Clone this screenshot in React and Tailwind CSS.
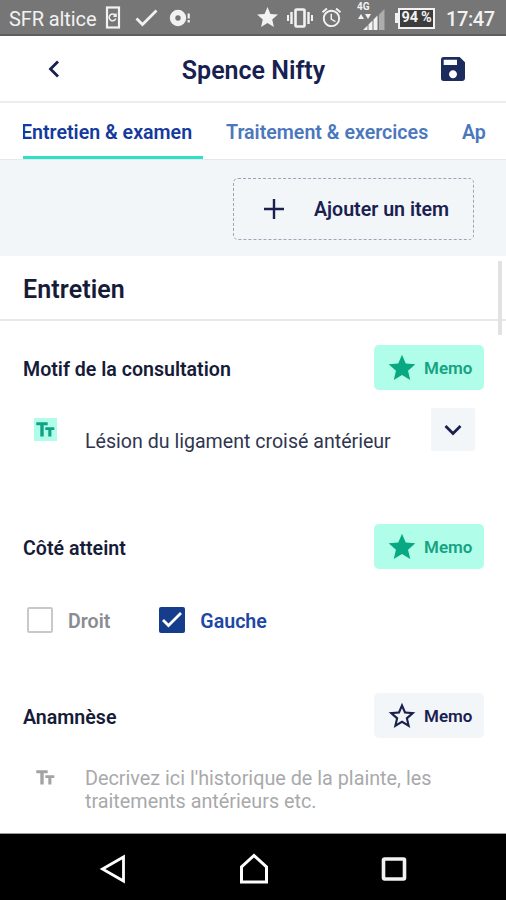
import clsx from 'clsx';
import { MdStar, MdStarBorder, MdAlarm, MdSave } from 'react-icons/md';

const StatusBar = () => {
    return (
        <div className="flex h-9 shrink-0 items-center border-b-2 border-[#5f5f5f] bg-[#767676] pl-[9px] pr-[11px] text-[#f2f2f2]">
            <span className="w-[96px] whitespace-nowrap pt-[3px] text-[20px] leading-9 tracking-[-0.1px]">SFR altice</span>
            <svg className="mt-px h-[23px] w-[16px]" viewBox="0 0 16 23" fill="none" stroke="currentColor">
                <rect x="2" y="1.5" width="12" height="20" strokeWidth="2.2" />
                <path d="M10.2 9.2A3.4 3.4 0 1 0 10.8 12.5M11 7.5v2.8H8.4" strokeWidth="1.5" />
            </svg>
            <svg className="ml-[14px] mt-[2px] h-[18px] w-[23px]" viewBox="0 0 23 18" fill="none" stroke="currentColor">
                <path d="M1.5 9.5l6 6L21.5 1.5" strokeWidth="2.8" />
            </svg>
            <svg className="ml-[11px] mt-[2px] h-[18px] w-[22px]" viewBox="0 0 22 18" fill="currentColor">
                <path fillRule="evenodd" d="M9 .8a8.2 8.2 0 1 0 0 16.4A8.2 8.2 0 0 0 9 .8zM9 6.3a2.7 2.7 0 1 1 0 5.4 2.7 2.7 0 0 1 0-5.4z" />
                <path d="M18.6 4.5h2.2v5h-2.2zM18.6 11h2.2v2.4h-2.2z" />
            </svg>
            <div className="ml-auto flex items-center">
                <MdStar className="mt-px size-[25px]" />
                <svg className="ml-[6px] mt-px h-[22px] w-[28px]" viewBox="0 0 28 22" fill="none" stroke="currentColor">
                    <rect x="9.5" y="2.5" width="9" height="17" rx="1" strokeWidth="2.6" />
                    <path d="M5.500 5v12M22.500 5v12" strokeWidth="2.4" />
                    <path d="M2 8v6M26 8v6" strokeWidth="2" />
                </svg>
                <MdAlarm className="ml-[6px] mt-px size-[23px]" />
                <svg className="ml-[14px] h-[32px] w-[30px]" viewBox="0 0 30 32" fill="currentColor">
                    <text x="0" y="9" fontSize="10" fontWeight="700" fontFamily="Roboto, sans-serif">4G</text>
                    <path d="M1 18l3-5 3 5zM8 13h6l-3 5z" />
                    <path d="M6 29l4.5-4.5V29zM11.5 23.5l4-4V29h-4zM16.5 18.5l4-4V29h-4z" />
                    <path d="M22 13.5L27.5 8V29H22z" opacity=".45" />
                </svg>
                <div className="ml-[8px] mt-px h-[10px] w-[3px] bg-[#f2f2f2]" />
                <div className="mt-[2px] flex h-[21px] w-[37px] items-center justify-center border-2 border-[#f2f2f2] bg-[#3c3c3c] pt-px text-[14.5px] font-bold leading-none tracking-[-0.3px]">
                    94 %
                </div>
                <span className="ml-[11px] w-[49px] whitespace-nowrap pt-[3px] text-[20px] font-medium leading-9 tracking-[-0.4px]">17:47</span>
            </div>
        </div>
    );
};

const Header = () => {
    return (
        <div className="flex h-[67px] shrink-0 items-center border-b-2 border-[#ebedf0] pl-[47px] pr-[37px]">
            <svg className="h-[18px] w-[12px]" viewBox="0 0 12 18" fill="none" stroke="#1a1f4d" strokeWidth="2.8">
                <path d="M11 1.5L3.5 9l7.5 7.5" />
            </svg>
            <h1 className="flex-1 pl-[11px] pt-[4px] text-center text-[25px] font-semibold leading-8 text-[#172150]">Spence Nifty</h1>
            <MdSave className="size-[32px] text-[#1c2c5c]" />
        </div>
    );
};

const Tabs = () => {
    return (
        <div className="flex h-[57px] shrink-0 overflow-hidden border-b border-[#e3e8ea] pl-[23px] text-[19.6px] font-semibold leading-[60px] text-[#4b78bd]">
            <div className="w-[180px] shrink-0 overflow-hidden whitespace-nowrap border-b-[3px] border-[#2fe0c6] text-[#143a9c]">
                <span className="-ml-[2px]">Entretien & examen</span>
            </div>
            <div className="ml-[23px] w-[236px] shrink-0 whitespace-nowrap">Traitement & exercices</div>
            <div className="whitespace-nowrap">Ap</div>
        </div>
    );
};

const MemoButton = ({ active }) => {
    const Icon = active ? MdStar : MdStarBorder;
    return (
        <button
            className={clsx(
                'flex h-[45px] w-[110px] items-center rounded-[5px] pl-[12px] text-[17px] font-semibold',
                active ? 'bg-[#b0fee9] text-[#16a283]' : 'bg-[#f3f6f8] text-[#1a2150]'
            )}
        >
            <Icon className={clsx('size-8 shrink-0', active && 'text-[#08a982]')} />
            <span className="ml-[6px] pt-[3px]">Memo</span>
        </button>
    );
};

const FieldTitle = ({ title, memo }) => {
    return (
        <div className="flex h-[45px] items-center justify-between pl-[23px] pr-[22px]">
            <h3 className="pt-[4px] text-[19.6px] font-semibold text-[#161c38]">{title}</h3>
            <MemoButton active={memo} />
        </div>
    );
};

// big T + small T, used as "text field" marker
const TextIcon = ({ className }) => {
    return (
        <svg className={clsx('size-[23px] shrink-0', className)} viewBox="0 0 23 23" fill="currentColor">
            <path d="M2.3 4.3h11.400v2.900H9.700V18.500H6.300V7.200h-4z" />
            <path d="M11.300 9.300h9v2.800h-2.900v6.400h-3.100v-6.400h-3z" />
        </svg>
    );
};

const CheckItem = ({ label, checked }) => {
    return (
        <label className={clsx('flex h-[26px] items-center text-[19.6px] font-semibold', checked ? 'text-[#1d47a6]' : 'text-[#8b8c92]')}>
            <span
                className={clsx(
                    'mr-[15px] flex size-[26px] items-center justify-center rounded-[2px]',
                    checked ? 'bg-[#163d8c]' : 'border-[2.5px] border-[#c9c9cb]'
                )}
            >
                {checked && (
                    <svg className="size-[22px]" viewBox="0 0 22 22" fill="none" stroke="#fff" strokeWidth="2.8">
                        <path d="M2 11l5.5 5.5L20 4" />
                    </svg>
                )}
            </span>
            <span className="pt-[3px]">{label}</span>
        </label>
    );
};

const NavBar = () => {
    return (
        <div className="flex h-[67px] shrink-0 items-center justify-between border-t border-[#9a9a9a] bg-black pl-[99px] pr-[98px] pt-[3px]">
            <svg className="h-[30px] w-[28px]" viewBox="0 0 28 30" fill="none" stroke="#fff" strokeWidth="2.8">
                <path d="M24.5 3v24L3.5 15z" />
            </svg>
            <svg className="h-[32px] w-[30px]" viewBox="0 0 30 32" fill="none" stroke="#fff" strokeWidth="3">
                <path d="M2.5 29V14L15 2.5 27.5 14v15z" />
            </svg>
            <svg className="h-[26px] w-[28px]" viewBox="0 0 28 26" fill="none" stroke="#f2f2f2" strokeWidth="3.6">
                <rect x="3.5" y="3" width="21" height="20" rx="1" />
            </svg>
        </div>
    );
};

const App = () => {
    return (
        <div className="flex h-[900px] w-[506px] flex-col overflow-hidden bg-white font-['Roboto',sans-serif]">
            <StatusBar />
            <Header />
            <Tabs />
            <div className="flex h-24 shrink-0 items-center justify-end bg-[#f2f6f8] pr-[32px]">
                <button className="mt-px flex h-[62px] w-[241px] items-center rounded-[5px] border border-dashed border-[#9fa5b8] pl-[29px] text-[#1a2150]">
                    <svg className="size-[22px]" viewBox="0 0 22 22" stroke="currentColor" strokeWidth="2.4">
                        <path d="M11 1v20M1 11h20" />
                    </svg>
                    <span className="ml-[29px] whitespace-nowrap pt-[3px] text-[19.6px] font-semibold">Ajouter un item</span>
                </button>
            </div>
            <main className="relative flex-1">
                <div className="absolute right-[4px] top-[5px] h-[74px] w-[4px] bg-[#e2e2e4]" />
                <h2 className="h-[65px] border-b-2 border-[#e8e8ea] pl-[23px] text-[25px] font-semibold leading-[68px] tracking-[0.1px] text-[#161c38]">
                    Entretien
                </h2>

                <section className="h-[179px] pt-6">
                    <FieldTitle title="Motif de la consultation" memo />
                    <div className="flex items-start pl-[34px] pr-[31px] pt-[18px]">
                        <TextIcon className="mt-[10px] bg-[#b0fee9] text-[#12a183]" />
                        <p className="ml-[28px] flex-1 whitespace-nowrap pt-[21px] text-[19.6px] leading-[26px] text-[#30364f]">
                            Lésion du ligament croisé antérieur
                        </p>
                        <button className="flex h-[43px] w-[44px] items-center justify-center rounded-[2px] bg-[#f3f6f8]">
                            <svg className="h-[12px] w-[18px]" viewBox="0 0 18 12" fill="none" stroke="#1a2150" strokeWidth="2.8">
                                <path d="M1.5 2L9 9.5 16.5 2" />
                            </svg>
                        </button>
                    </div>
                </section>

                <section className="h-[169px] pt-6">
                    <FieldTitle title="Côté atteint" memo />
                    <div className="flex gap-[49px] pl-[27px] pt-[38px]">
                        <CheckItem label="Droit" />
                        <CheckItem label="Gauche" checked />
                    </div>
                </section>

                <section className="pt-6">
                    <FieldTitle title="Anamnèse" />
                    <div className="flex items-start pl-[34px] pt-[28px]">
                        <TextIcon className="text-[#a3a3a5]" />
                        <p className="ml-[28px] whitespace-nowrap pt-px text-[19.8px] leading-[23px] text-[#a9a9ab]">
                            Decrivez ici l'historique de la plainte, les
                            <br />
                            traitements antérieurs etc.
                        </p>
                    </div>
                </section>
            </main>
            <NavBar />
        </div>
    );
};

export default App;
